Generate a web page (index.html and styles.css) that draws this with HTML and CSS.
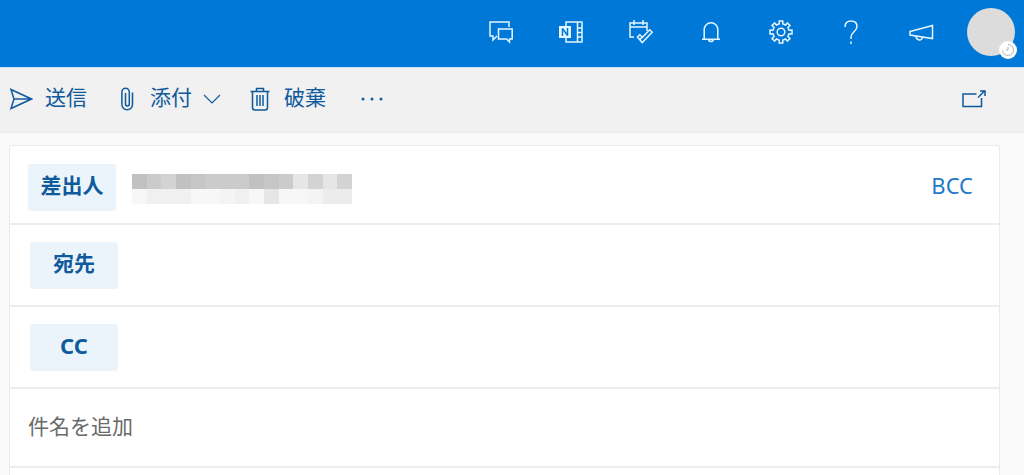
FILE: index.html
```html
<!DOCTYPE html>
<html lang="ja">
<head>
    <meta charset="UTF-8">
    <meta name="viewport" content="width=device-width, initial-scale=1.0">
    <title>メール作成</title>
    <link rel="stylesheet" href="styles.css">
</head>
<body>
    <header class="header">
        <button class="header-btn" aria-label="チャット">
            <svg class="icon" viewBox="0 0 24 24"><path d="M20 7V2H1v14h3v4l4-4"/><path d="M9.500 9h13.700v10h-2.700v3l-3-3h-8z"/></svg>
        </button>
        <button class="header-btn" aria-label="OneNote">
            <svg class="icon" viewBox="0 0 24 24"><path d="M7 6V2h16v20H7v-4M18.500 2v20M18.500 8H23M18.500 12.500H23M18.500 17H23"/><path class="fill" d="M0 6h12v12H0z"/><path class="letter-mark" d="M3.500 16V8.500L8.500 15.500V8"/></svg>
        </button>
        <button class="header-btn" aria-label="予定">
            <svg class="icon" viewBox="0 0 24 24"><path d="M5 17H1V3h17v8M1 7h17M5 0v5M14 0v5"/><path d="M8.500 17l2.300-2.300 2.700 2.500 7.200-7.400 2.500 2.500-10 10.300zM10.800 19.300l2.700-2.100"/></svg>
        </button>
        <button class="header-btn" aria-label="通知">
            <svg class="icon" viewBox="0 0 24 24"><path d="M3 19.200h18M5.200 19V9.500a6.800 6.800 0 0 1 13.600 0V19M9.500 19a2.500 2.500 0 0 0 5 0"/></svg>
        </button>
        <button class="header-btn" aria-label="設定">
            <svg class="icon" viewBox="0 0 24 24"><path d="M10.300 3.800L10.200 1h3.600l-.1 2.800 2.800 1.200 1.900-2.100 2.600 2.600-2.100 1.900 1.200 2.800 2.900-.1v3.800l-2.900-.1-1.200 2.800 2.100 1.900-2.600 2.600-1.900-2.100-2.800 1.200.1 2.800h-3.600l.1-2.800-2.800-1.200-1.900 2.100L3 18.500l2.100-1.900-1.200-2.800-2.900.1v-3.800l2.900.1 1.200-2.800L3 5.500l2.600-2.600L7.500 5z"/><circle cx="12" cy="12" r="3.800"/></svg>
        </button>
        <button class="header-btn" aria-label="ヘルプ">
            <svg class="icon" viewBox="0 0 24 24"><path d="M6 7c0-4 2.500-6 6-6s6 2 6 5.500c0 5-6 5.500-6 10.500v2M12 21.500V24"/></svg>
        </button>
        <button class="header-btn" aria-label="お知らせ">
            <svg class="icon icon-wide" viewBox="0 0 26 24"><path d="M2 11.500l22.500-6v13L2 15zM8 16c0 4.500 6 5.500 6.500 1.300"/></svg>
        </button>
        <button class="avatar" aria-label="アカウント">
            <span class="status">
                <svg viewBox="0 0 18 18"><path d="M9 3.500a5.500 5.500 0 1 1-5.500 6M9 6v3H7"/></svg>
            </span>
        </button>
    </header>

    <nav class="toolbar">
        <button class="tool">
            <svg class="icon" viewBox="0 0 24 24"><path d="M2 2.500L22.500 12 2 21.500 5 12zM5 12h17"/></svg>
            <span>送信</span>
        </button>
        <button class="tool tool-attach">
            <svg class="icon icon-clip" viewBox="0 0 14 24"><path d="M12.500 5.500v12a5.300 5.300 0 0 1-10.600 0V5a3.700 3.700 0 0 1 7.400 0v12a1.900 1.900 0 0 1-3.800 0V6"/></svg>
            <span>添付</span>
            <svg class="icon icon-chevron" viewBox="0 0 18 24"><path d="M1 8l8 8 8-8"/></svg>
        </button>
        <button class="tool tool-discard">
            <svg class="icon icon-trash" viewBox="0 0 20 24"><path d="M.5 4.500h19M6.500 4V1.500h7V4M2.500 4.500v16a2.500 2.500 0 0 0 2.500 2.500h10a2.500 2.500 0 0 0 2.500-2.500v-16M7 8v11M10 8v11M13 8v11"/></svg>
            <span>破棄</span>
        </button>
        <button class="tool tool-more" aria-label="その他">
            <svg class="icon" viewBox="0 0 24 24"><circle class="fill" cx="3" cy="12" r="1.500"/><circle class="fill" cx="12" cy="12" r="1.500"/><circle class="fill" cx="21" cy="12" r="1.500"/></svg>
        </button>
        <button class="tool tool-popout" aria-label="新しいウィンドウで開く">
            <svg class="icon" viewBox="0 0 24 24"><path d="M14.500 7H1v12.500h18.500V11M16 10.500l6.500-6.500M18 4h5v5"/></svg>
        </button>
    </nav>

    <form class="compose">
        <div class="row row-from">
            <button type="button" class="chip">差出人</button>
            <svg class="sender" viewBox="0 0 15 2" preserveAspectRatio="none" shape-rendering="crispEdges" role="img" aria-label="差出人アドレス">
                <path fill="#c1c1c1" d="M0 0h1v1H0zM3 0h1v1H3zM8 0h1v1H8z"/>
                <path fill="#c6c6c6" d="M4 0h1v1H4zM9 0h1v1H9z"/>
                <path fill="#cbcbcb" d="M1 0h1v1H1zM5 0h3v1H5zM10 0h1v1h-1z"/>
                <path fill="#d3d3d3" d="M2 0h1v1H2zM12 0h1v1h-1zM14 0h1v1h-1z"/>
                <path fill="#e6e6e6" d="M11 0h1v1h-1zM13 0h1v1h-1zM9 1h1v1H9z"/>
                <path fill="#f7f7f7" d="M0 1h1v1H0zM4 1h2v1H4zM8 1h1v1H8zM10 1h2v1h-2z"/>
                <path fill="#f0f0f0" d="M1 1h3v1H1zM7 1h1v1H7z"/>
                <path fill="#f4f4f4" d="M6 1h1v1H6zM12 1h1v1h-1z"/>
                <path fill="#ececec" d="M13 1h2v1h-2z"/>
            </svg>
            <a href="#" class="bcc">BCC</a>
        </div>
        <div class="row row-to">
            <button type="button" class="chip">宛先</button>
            <input type="text" class="field" aria-label="宛先">
        </div>
        <div class="row row-to">
            <button type="button" class="chip chip-latin">CC</button>
            <input type="text" class="field" aria-label="CC">
        </div>
        <div class="row row-subject">
            <input type="text" class="field" placeholder="件名を追加" aria-label="件名">
        </div>
    </form>
</body>
</html>
```

FILE: styles.css
```css
* {
    box-sizing: border-box;
}
body {
    margin: 0;
    min-height: 100vh;
    display: flex;
    flex-direction: column;
    background: #fafafa;
    font-family: "Noto Sans", "Noto Sans CJK JP", sans-serif;
    font-size: 21px;
    line-height: 28px;
}
button {
    padding: 0;
    border: none;
    background: none;
    color: inherit;
    font: inherit;
    cursor: pointer;
}
.icon {
    display: block;
    width: 24px;
    height: 24px;
    fill: none;
    stroke: currentColor;
    stroke-width: 1.5;
}
.icon .fill {
    fill: currentColor;
    stroke: none;
}
.icon .letter-mark {
    stroke: #0078d7;
    stroke-linejoin: bevel;
}

/* top bar */
.header {
    display: flex;
    justify-content: flex-end;
    height: 68px;
    padding-right: 9px;
    background: #0078d7;
    border-bottom: 1px solid #cfe4f6;
    color: #e4f6ff;
}
.header-btn {
    display: flex;
    align-items: center;
    justify-content: center;
    width: 70px;
    height: 64px;
}
.header .icon-wide {
    width: 26px;
}
.avatar {
    position: relative;
    width: 48px;
    height: 48px;
    margin: 8px 0 0 11px;
    border-radius: 50%;
    background: #dcdcdc;
}
.status {
    position: absolute;
    right: -2px;
    bottom: -3px;
    width: 18px;
    height: 18px;
    border-radius: 50%;
    background: #fff;
}
.status svg {
    display: block;
    fill: none;
    stroke: #b5aeb0;
}

/* commands */
.toolbar {
    display: flex;
    align-items: flex-start;
    height: 65px;
    padding: 16px 38px 0 9px;
    background: #f1f1f1;
    border-bottom: 1px solid #ececec;
    color: #0f5a9c;
}
.tool {
    display: flex;
    align-items: center;
    gap: 12px;
    height: 30px;
}
.tool span {
    padding-bottom: 4px;
}
.tool-attach {
    margin-left: 33px;
    gap: 16px;
}
.tool-attach .icon-chevron {
    width: 18px;
    margin-left: -5px;
    stroke-width: 1.2;
}
.tool-attach .icon-clip {
    width: 14px;
}
.tool-discard {
    margin-left: 29px;
    gap: 14px;
}
.tool-discard .icon-trash {
    width: 20px;
}
.tool-more {
    margin-left: 34px;
}
.tool-popout {
    margin-left: auto;
}

/* message */
.compose {
    flex: 1;
    margin: 12px 24px 0 9px;
    background: #fff;
    border: 1px solid #ebebeb;
    border-bottom: none;
    border-radius: 3px 3px 0 0;
}
.row {
    display: flex;
    align-items: center;
    border-bottom: 2px solid #ededed;
}
.row-from {
    height: 79px;
    padding: 5px 26px 0 18px;
}
.row-to {
    height: 82px;
    padding: 0 26px 0 20px;
}
.row-subject {
    height: 79px;
    padding: 0 26px 4px 18px;
}
.chip {
    width: 88px;
    height: 47px;
    padding-bottom: 4px;
    border-radius: 3px;
    background: #ebf4fb;
    color: #0f5a9c;
    font-weight: bold;
}
.chip-latin {
    font-size: 22px;
}
.sender {
    width: 220px;
    height: 30px;
    margin: 4px 0 0 16px;
}
.bcc {
    margin-left: auto;
    padding-bottom: 4px;
    color: #1f7ac9;
    font-size: 22px;
    text-decoration: none;
}
.field {
    flex: 1;
    min-width: 0;
    padding: 0;
    border: none;
    outline: none;
    background: none;
    font: inherit;
    color: #333;
}
.row-to .field {
    margin-left: 14px;
}
.field::placeholder {
    color: #6a6a6a;
}
```
